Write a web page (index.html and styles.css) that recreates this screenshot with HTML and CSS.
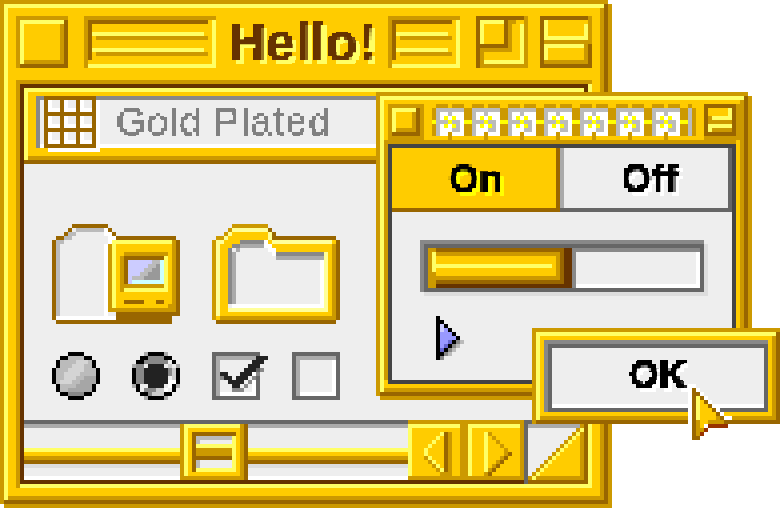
FILE: index.html
```html
<!DOCTYPE html>
<html>
<head>
  <meta charset="UTF-8" />
  <meta name="viewport" content="width=device-width, initial-scale=1.0" />
  <title>Gold Plated</title>
  <link rel="stylesheet" href="styles.css">
</head>
<body>
  <svg class="defs" width="0" height="0">
    <filter id="chunky" x="-8" y="-8" width="340" height="120" filterUnits="userSpaceOnUse" color-interpolation-filters="sRGB">
      <feFlood x="1" y="1" width="2" height="2" flood-color="#000"/>
      <feComposite width="4" height="4"/>
      <feTile result="grid"/>
      <feComposite in="SourceGraphic" in2="grid" operator="in"/>
      <feMorphology operator="dilate" radius="1"/>
      <feComponentTransfer>
        <feFuncA type="discrete" tableValues="0 1"/>
      </feComponentTransfer>
    </filter>
  </svg>

  <div class="stage">
    <!-- main window -->
    <div class="window main-window">
      <div class="titlebar">
        <div class="close-box"></div>
        <svg class="px bar-left" width="132" height="52" viewBox="0 0 33 13">
          <path stroke="#c90" d="M0 .5h33M.5 1v12M3 5.5h28M3 9.5h28"/>
          <path stroke="#960" d="M1 1.5h30M1.5 2v9"/>
          <path stroke="#ff6" d="M32.5 1v12M1 12.5h31M2 4.5h28M2 8.5h28"/>
        </svg>
        <div class="title">Hello!</div>
        <svg class="px" width="72" height="52" viewBox="0 0 18 13">
          <path stroke="#c90" d="M0 .5h18M.5 1v12M3 5.5h13M3 9.5h13"/>
          <path stroke="#960" d="M1 1.5h15M1.5 2v9"/>
          <path stroke="#ff6" d="M17.5 1v12M1 12.5h16M2 4.5h13M2 8.5h13"/>
        </svg>
        <svg class="px zoom-box" width="52" height="52" viewBox="0 0 13 13">
          <path stroke="#c90" d="M12.5 0v13M1 12.5h12M1 8.5h7M8.5 2v7M8 1.5h2M1.5 9v3"/>
          <path stroke="#960" d="M0 .5h12M.5 0v13M7.5 1v7M1 7.5h7"/>
          <path stroke="#ff6" d="M1 1.5h6M1.5 2v5M11.5 2v10M2 11.5h9"/>
        </svg>
        <svg class="px shade-box" width="52" height="52" viewBox="0 0 13 13">
          <path stroke="#c90" d="M12 .5h1M12.5 1v6M1 6.5h12M1 11.5h11M11.5 7v4"/>
          <path stroke="#960" d="M0 .5h12M.5 0v13M0 12.5h13M12.5 7v6"/>
          <path stroke="#ff6" d="M1.5 1v4M1 5.5h11M11.5 2v3M1 7.5h10M1.5 8v3"/>
        </svg>
      </div>

      <div class="well">
        <div class="header">
          <div class="field">
            <svg class="px grid-icon" width="56" height="56" viewBox="0 0 14 14">
              <path stroke="#fff" d="M13.5 1v13M1 13.5h13M1 3.5h3M5 3.5h3M9 3.5h3M1 7.5h3M5 7.5h3M9 7.5h3M1 11.5h3M5 11.5h3M9 11.5h3M1.5 1v2M5.5 1v2M9.5 1v2M1.5 5v2M5.5 5v2M9.5 5v2M1.5 9v2M5.5 9v2M9.5 9v2"/>
              <path stroke="#960" d="M0 .5h13M0 4.5h13M0 8.5h13M0 12.5h13M.5 0v13M4.5 0v13M8.5 0v13M12.5 0v13"/>
            </svg>
            <div class="field-text">Gold Plated</div>
          </div>
        </div>

        <div class="content">
          <svg class="px icon" width="128" height="100" viewBox="0 0 32 25">
            <rect x="15" y="4" width="16" height="18" fill="#fc0"/>
            <rect x="19" y="9" width="9" height="6" fill="#ccf"/>
            <path stroke="#bbb" d="M6 1.5h7M4 2.5h2M3 3.5h2M1 4.5h2M1.5 5v18"/>
            <path stroke="#fff" d="M13 1.5h1M13 2.5h2M14 3.5h2M14 4.5h1M13.5 5v18M1 23.5h15"/>
            <path stroke="#c90" d="M14.5 5v17M30.5 4v17M29 20.5h2M15 21.5h16M18 7.5h11M17.5 8v9M18 15.5h11"/>
            <path stroke="#ff6" d="M15.5 4v17M16 4.5h14M18 16.5h11M28.5 8v8"/>
            <path stroke="#cff" d="M27.5 9v6M20 14.5h8"/>
            <path stroke="#bbb" d="M25 9.5h2M24 10.5h3M23 11.5h2M22 12.5h2M20 13.5h3"/>
            <path stroke="#999" d="M26 10.5h1M25 11.5h2M24 12.5h3M23 13.5h4"/>
            <path stroke="#960" d="M5 .5h9M4 1.5h1M14 1.5h1M3 2.5h1M15 2.5h1M1 3.5h2M16 3.5h15M.5 4v20M1 24.5h29M31.5 4v19M16 22.5h15M16 23.5h14M18 8.5h10M18.5 9v6M18 19.5h5M26 19.5h2"/>
          </svg>

          <svg class="px icon" width="128" height="100" viewBox="0 0 32 25">
            <path fill="#fc0" d="M5 1h9v1h1v2h16v20H1V4h2V3h1V2h1z"/>
            <path fill="#eee" d="M4 7V6h1V5h9v1h1v1h13v14H4z"/>
            <path stroke="#888" d="M7 4.5h6M5 5.5h2M4.5 6v14M16 7.5h12"/>
            <path stroke="#aaa" d="M7 5.5h6M5.5 7v13M6 6.5h1M16 8.5h12"/>
            <path stroke="#fff" d="M13 4.5h1M13 5.5h2M14 6.5h2M15 7.5h1M27.5 9v11M5 20.5h23"/>
            <path stroke="#ff9" d="M5 1.5h9M4 2.5h1M3 3.5h1M1 4.5h2M1.5 5v18M16 4.5h14M28.5 7v14M4 21.5h25M14 2.5h1M14 3.5h1M15 4.5h1"/>
            <path stroke="#c90" d="M5 .5h9M4 1.5h1M3 2.5h1M1 3.5h2M.5 4v20M30.5 5v18M2 23.5h29"/>
            <path stroke="#960" d="M14 1.5h1M15 2.5h1M15 3.5h16M31.5 4v20M1 24.5h30"/>
          </svg>

          <svg class="px" width="48" height="48" viewBox="0 0 12 12">
            <path stroke="#bbb" d="M4 1.5h4M2 2.5h8M2 3.5h8M1 4.5h10M1 5.5h10M1 6.5h10M1 7.5h10M2 8.5h8M2 9.5h8M4 10.5h4"/>
            <path stroke="#d4d4d4" d="M6 2.5h3M5 3.5h3M4 4.5h4M3 5.5h4M3 6.5h3M2 7.5h3"/>
            <path stroke="#a6a6a6" d="M8 6.5h3M7 7.5h4M6 8.5h4M4 9.5h6"/>
            <path stroke="#888" d="M4 10.5h4"/>
            <path stroke="#000" d="M4 .5h4M2 1.5h2M8 1.5h2M1.5 2v2M10.5 2v2M.5 4v4M11.5 4v4M1.5 8v2M10.5 8v2M2 10.5h2M8 10.5h2M4 11.5h4"/>
          </svg>

          <svg class="px" width="48" height="48" viewBox="0 0 12 12">
            <path stroke="#aaa" d="M3 .5h1M8 .5h1M3 11.5h1M8 11.5h1M.5 3v1M11.5 3v1M.5 8v1M11.5 8v1"/>
            <path stroke="#888" d="M4 1.5h4M1.5 3v6M2.5 3v5M3 2.5h6M3 9.5h3M9.5 4v2M4 10.5h1"/>
            <path stroke="#ccc" d="M9 3.5h1M10 4.5h1M10 5.5h1M6 9.5h2M5 10.5h3M10 6.5h1"/>
            <path stroke="#fff" d="M9 7.5h2M9 8.5h1M8 9.5h1"/>
            <path stroke="#222" d="M4 3.5h4M3 4.5h6M3 5.5h6M3 6.5h6M3 7.5h6M4 8.5h4"/>
            <path stroke="#000" d="M4 .5h4M2 1.5h2M8 1.5h2M1 2.5h2M10 2.5h1M.5 4v4M11.5 4v4M1.5 8v2M10.5 8v2M2 10.5h2M8 10.5h2M4 11.5h4"/>
          </svg>

          <div class="check">
            <svg class="px check-mark" width="56" height="48" viewBox="0 0 14 12">
              <path stroke="#888" d="M12 4.5h1M11 5.5h1M10 6.5h1M9 7.5h1M8 8.5h1M5 9.5h3M2 6.5h1"/>
              <path stroke="#222" d="M11 1.5h3M10 2.5h3M9 3.5h3M8 4.5h3M2 5.5h2M7 5.5h3M3 6.5h2M6 6.5h3M4 7.5h4M5 8.5h2"/>
            </svg>
          </div>
          <div class="check"></div>
        </div>

        <div class="scrollbar">
          <div class="track">
            <div class="rail"></div>
            <div class="thumb">
              <div class="thumb-hole">
                <div class="thumb-rail"></div>
              </div>
            </div>
          </div>
          <div class="arrows">
            <div class="arrow-btn">
              <svg class="px" width="52" height="52" viewBox="0 0 13 13">
                <path stroke="#ff6" d="M8 2.5h1M7 3.5h1M6 4.5h1M5 5.5h1M4 6.5h1M4 7.5h1M5 8.5h1M6 9.5h1M7 10.5h1M8 11.5h1"/>
                <path stroke="#c90" d="M4 8.5h1M5 9.5h1M6 10.5h1M7 11.5h1M10.5 2v11M8 12.5h3"/>
                <path stroke="#960" d="M9.5 2v10"/>
              </svg>
            </div>
            <div class="arrow-btn">
              <svg class="px" width="52" height="52" viewBox="0 0 13 13">
                <path stroke="#ff6" d="M4.5 2v10"/>
                <path stroke="#c90" d="M5 2.5h1M6 3.5h1M7 4.5h1M8 5.5h1M9 6.5h1M9 7.5h1M8 8.5h1M7 9.5h1M6 10.5h1M5 11.5h1M4 12.5h1"/>
                <path stroke="#960" d="M10 7.5h1M9 8.5h1M8 9.5h1M7 10.5h1M6 11.5h1M5 12.5h1"/>
              </svg>
            </div>
          </div>
          <svg class="px resize-box" width="64" height="64" viewBox="0 0 16 16">
            <rect width="16" height="16" fill="#eee"/>
            <path fill="#fc0" d="M15 2v13H2z"/>
            <path stroke="#666" d="M0 .5h16M.5 0v16"/>
            <path stroke="#aaa" d="M1 1.5h13"/>
            <path stroke="#c90" d="M14 1.5h1M14.5 3v12M3 14.5h12M13 2.5h1M12 3.5h1M11 4.5h1M10 5.5h1M9 6.5h1M8 7.5h1M7 8.5h1M6 9.5h1M5 10.5h1M4 11.5h1M3 12.5h1M2 13.5h1M1 14.5h1"/>
            <path stroke="#ff6" d="M14 2.5h1M13 3.5h1M12 4.5h1M11 5.5h1M10 6.5h1M9 7.5h1M8 8.5h1M7 9.5h1M6 10.5h1M5 11.5h1M4 12.5h1M3 13.5h1M2 14.5h1"/>
            <path stroke="#960" d="M15.5 1v15M1 15.5h15"/>
          </svg>
        </div>
      </div>
    </div>

    <!-- palette window -->
    <div class="window palette">
      <div class="palette-bar">
        <div class="palette-close"></div>
        <svg class="px stripes" width="264" height="36" viewBox="0 0 66 9">
          <defs>
            <pattern id="flower" width="9" height="9" patternUnits="userSpaceOnUse">
              <path stroke="#c90" d="M1 .5h3M5 .5h3M.5 1v3M.5 5v3M8.5 1v3M8.5 5v3M4 7.5h1M4 8.5h1"/>
              <path stroke="#ff0" d="M0 4.5h1M8 4.5h1"/>
              <path stroke="#fff" d="M1 1.5h7M1 2.5h7M1 3.5h7M1 4.5h7M1 5.5h7M1 6.5h7M1 7.5h3M5 7.5h3"/>
              <path stroke="#bbb" d="M1 1.5h7M1.5 2v6M4 2.5h1M2 4.5h2M5 4.5h2M6 5.5h1M5 6.5h2"/>
              <path stroke="#ff0" d="M3 3.5h1M5 3.5h1M4 4.5h1M3 5.5h1M5 5.5h1"/>
            </pattern>
          </defs>
          <rect width="65" height="9" fill="url(#flower)"/>
          <path stroke="#c90" d="M65.5 1v7"/>
        </svg>
        <svg class="px" width="36" height="36" viewBox="0 0 9 9">
          <rect width="9" height="9" fill="#c90"/>
          <rect x="1" y="1" width="5" height="2" fill="#fc0"/>
          <path stroke="#960" d="M0 .5h8M0 7.5h8M.5 0v8M7.5 0v8"/>
          <path stroke="#ff6" d="M6.5 1v2M2 3.5h5M1 5.5h6M1 6.5h1"/>
        </svg>
      </div>

      <div class="palette-well">
        <div class="tabs">
          <div class="tab tab-on">On</div>
          <div class="tab tab-off">Off</div>
        </div>
        <div class="progress">
          <svg class="px" width="144" height="40" viewBox="0 0 36 10">
            <rect width="36" height="10" fill="#fc0"/>
            <path stroke="#c90" d="M.5 0v10M1 .5h1M2 1.5h31M32.5 2v5M2 7.5h31"/>
            <path stroke="#ff6" d="M1.5 1v5M2 4.5h29"/>
            <path stroke="#960" d="M2 .5h32M33.5 1v8M2 8.5h32"/>
            <path stroke="#630" d="M34 .5h2M34 1.5h2M34 2.5h2M34 3.5h2M34 4.5h2M34 5.5h2M34 6.5h2M34 7.5h2M34 8.5h2M2 9.5h34"/>
            <path stroke="#c90" d="M1 6.5h1M1 7.5h1M1 8.5h1M1 9.5h1"/>
          </svg>
          <div class="progress-rest"></div>
        </div>
        <svg class="px pointer" width="28" height="48" viewBox="0 0 7 12">
          <path stroke="#99f" d="M1.5 2v7M2.5 3v5M3.5 4v3M4 5.5h1"/>
          <path stroke="#66c" d="M3 6.5h1M2 7.5h1M1 8.5h1"/>
          <path stroke="#ccf" d="M1 2.5h1M1 3.5h1"/>
          <path stroke="#888" d="M5 6.5h1M4 7.5h1M3 8.5h1M2 9.5h1M1 10.5h1"/>
          <path stroke="#bbb" d="M6 6.5h1M5 7.5h1M4 8.5h1M3 9.5h1"/>
          <path stroke="#000" d="M.5 0v11M1 1.5h1M2 2.5h1M3 3.5h1M4 4.5h1M5 5.5h1M4 6.5h1M3 7.5h1M2 8.5h1M1 9.5h1"/>
        </svg>
      </div>
    </div>

    <!-- alert button -->
    <div class="window ok-window">
      <div class="ok-button">
        <div class="ok-text">OK</div>
      </div>
    </div>

    <svg class="px cursor" width="44" height="56" viewBox="0 0 11 14">
      <path stroke="#fc0" d="M3 4.5h1M3 5.5h2M3 6.5h3M3 7.5h4M3 8.5h4M3 9.5h2M3 10.5h1"/>
      <path stroke="#c90" d="M7 8.5h1M5 9.5h4M2.5 9v4M3 11.5h1"/>
      <path stroke="#ff6" d="M2.5 3v6"/>
      <path stroke="#fff" d="M.5 0v14M1 .5h1M2 1.5h1M3 2.5h1M4 3.5h1M5 4.5h1M6 5.5h1M7 6.5h1M8 7.5h1M9 8.5h2"/>
      <path stroke="#960" d="M1.5 1v13M2 2.5h1M3 3.5h1M4 4.5h1M5 5.5h1M6 6.5h1M7 7.5h1M8 8.5h1M9 9.5h1M2 13.5h1"/>
      <path stroke="#930" d="M5 10.5h5M4 11.5h1M3 12.5h1"/>
    </svg>
  </div>
</body>
</html>
```

FILE: styles.css
```css
body {
  margin: 0;
  background-color: #fff;
  font-family: "Liberation Sans", Arial, sans-serif;
}

.defs {
  position: absolute;
}

.stage {
  position: relative;
  width: 780px;
  height: 508px;
  overflow: hidden;
}

.px {
  display: block;
  flex: none;
  fill: none;
  shape-rendering: crispEdges;
}

.window {
  position: absolute;
  box-sizing: border-box;
  background-color: #fc0;
  box-shadow:
    4px 4px 0 #c90,
    inset 4px 4px 0 #c90,
    inset -4px -4px 0 #960,
    inset 8px 8px 0 #ff6,
    inset -8px -8px 0 #c90;
}

/* main window */
.main-window {
  left: 0;
  top: 0;
  width: 608px;
  height: 504px;
  padding: 16px;
}

.titlebar {
  display: flex;
  height: 52px;
  margin-bottom: 12px;
}

.close-box {
  flex: none;
  width: 52px;
  height: 52px;
  margin-right: 16px;
  box-shadow:
    inset 4px 4px 0 #c90,
    inset -4px -4px 0 #960,
    inset 8px 8px 0 #ff6,
    inset -8px -8px 0 #c90;
}

.title {
  flex: 1;
  height: 52px;
  line-height: 52px;
  text-align: center;
  font-size: 52px;
  font-weight: bold;
  letter-spacing: 0.5px;
  color: #630;
  -webkit-text-stroke: 0.5px #630;
  text-shadow: 4px 4px 0 #ff6;
  filter: url(#chunky);
}

.zoom-box {
  margin-left: 16px;
}

.shade-box {
  margin-left: 12px;
}

.well {
  display: flex;
  flex-direction: column;
  height: 408px;
  box-sizing: border-box;
  padding: 8px;
  box-shadow:
    inset 4px 4px 0 #c90,
    inset -4px -4px 0 #ff6,
    inset 8px 8px 0 #630,
    inset -8px -8px 0 #630;
}

.header {
  box-sizing: border-box;
  height: 76px;
  padding: 8px 0 0 12px;
  border-bottom: 4px solid #960;
  box-shadow: inset 4px 4px 0 #ff6, inset 0 -4px 0 #c90;
}

.field {
  display: flex;
  height: 52px;
  box-sizing: border-box;
  padding-left: 8px;
  background-color: #eee;
  box-shadow: inset 4px 4px 0 #888, inset 0 -4px 0 #fff;
}

.field-text {
  width: 260px;
  height: 48px;
  margin-left: 16px;
  line-height: 52px;
  font-size: 38px;
  letter-spacing: 1.5px;
  color: #808080;
  filter: url(#chunky);
}

.content {
  flex: 1;
  display: grid;
  grid-template-columns: repeat(4, 48px);
  grid-template-rows: 100px 48px;
  gap: 28px 32px;
  align-content: start;
  padding: 60px 0 0 28px;
  background-color: #eee;
}

.icon {
  grid-column: span 2;
}

.check {
  position: relative;
  width: 48px;
  height: 48px;
  box-sizing: border-box;
  box-shadow:
    inset 0 0 0 4px #666,
    inset 8px 8px 0 #aaa,
    inset -8px -8px 0 #fff;
}

.check-mark {
  position: absolute;
  left: 0;
  top: 0;
}

/* scroll bar */
.scrollbar {
  display: flex;
  height: 60px;
}

.track {
  position: relative;
  flex: 1;
  box-sizing: border-box;
  padding-top: 24px;
  border-top: 4px solid #666;
  background-color: #eee;
  box-shadow: inset 0 4px 0 #aaa, inset 0 -4px 0 #fff;
}

.rail {
  height: 20px;
  background: linear-gradient(#ff6 4px, #fc0 4px, #fc0 8px, #c90 8px, #c90 12px, #960 12px, #960 16px, #ddd 16px);
}

.thumb {
  position: absolute;
  left: 156px;
  top: 0;
  width: 68px;
  height: 56px;
  box-sizing: border-box;
  padding: 8px 12px 8px 12px;
  background-color: #fc0;
  box-shadow:
    inset 4px 0 0 #c90,
    inset -4px 0 0 #960,
    inset 0 -4px 0 #c90,
    inset -8px 0 0 #c90,
    inset 8px 4px 0 #ff6;
}

.thumb-hole {
  height: 40px;
  box-sizing: border-box;
  padding: 12px 4px 0 4px;
  background-color: #eee;
  box-shadow:
    inset 4px 4px 0 #960,
    inset -4px -4px 0 #ff6,
    inset 8px 8px 0 #bbb;
}

.thumb-rail {
  height: 16px;
  background: linear-gradient(#ff6 4px, #c90 4px, #c90 12px, #960 12px);
}

.arrows {
  display: flex;
  gap: 8px;
  padding: 4px 4px 4px 0;
  background-color: #c90;
}

.arrow-btn {
  background-color: #fc0;
  box-shadow: inset 4px 4px 0 #ff6;
}

.resize-box {
  margin: 0 -4px -4px 0;
  position: relative;
}

/* palette window */
.palette {
  left: 376px;
  top: 92px;
  width: 372px;
  height: 304px;
  padding: 8px;
}

.palette-bar {
  display: flex;
  gap: 8px;
  height: 40px;
  padding: 4px 0 0 4px;
  box-sizing: border-box;
}

.palette-close {
  flex: none;
  width: 36px;
  height: 36px;
  box-shadow:
    inset 0 0 0 4px #c90,
    inset -8px -8px 0 #960,
    inset 8px 8px 0 #ff6,
    inset -12px -12px 0 #c90;
}

.palette-well {
  height: 240px;
  box-sizing: border-box;
  margin: 4px;
  border: 4px solid #444;
  background-color: #eee;
  box-shadow: -4px -4px 0 #c90, 0 -4px 0 #c90;
}

.tabs {
  display: flex;
  height: 64px;
}

.tab {
  flex: none;
  box-sizing: border-box;
  height: 64px;
  line-height: 62px;
  text-align: center;
  font-size: 38px;
  font-weight: bold;
  letter-spacing: 0.5px;
  color: #000;
  -webkit-text-stroke: 1.5px #000;
  filter: url(#chunky);
}

.tab-on {
  width: 168px;
  padding-left: 4px;
  background-color: #fc0;
  border-right: 4px solid #960;
  border-bottom: 4px solid #960;
  text-shadow: 4px 4px 0 #ff0;
}

.tab-off {
  width: 172px;
  padding-left: 12px;
  border-right: 4px solid #666;
  border-bottom: 4px solid #666;
  box-shadow: inset 4px 0 0 #aaa;
  text-shadow: 4px 4px 0 #fff;
}

.progress {
  display: flex;
  width: 284px;
  height: 52px;
  box-sizing: border-box;
  margin: 28px 0 0 28px;
  padding: 8px 4px 4px 8px;
  box-shadow:
    4px 4px 0 #ddd,
    inset 4px 4px 0 #888,
    inset -4px -4px 0 #666,
    inset 8px 8px 0 #666;
}

.progress-rest {
  flex: 1;
  box-shadow:
    inset 4px 4px 0 #888,
    inset -4px -4px 0 #fff;
}

.pointer {
  margin: 24px 0 0 44px;
}

/* OK button */
.ok-window {
  left: 532px;
  top: 328px;
  width: 248px;
  height: 96px;
  padding: 12px;
  box-shadow:
    inset 4px 4px 0 #c90,
    inset -4px -4px 0 #960,
    inset 8px 8px 0 #ff6,
    inset -8px -8px 0 #c90;
}

.ok-button {
  height: 72px;
  background-color: #eee;
  box-shadow:
    inset 4px 4px 0 #888,
    inset -4px -4px 0 #666,
    inset 8px 8px 0 #666,
    inset 0 -8px 0 #fff;
}

.ok-text {
  height: 72px;
  line-height: 70px;
  padding-left: 4px;
  text-align: center;
  font-size: 38px;
  font-weight: bold;
  color: #000;
  -webkit-text-stroke: 1.5px #000;
  text-shadow: 4px 4px 0 #fff;
  filter: url(#chunky);
}

.cursor {
  position: absolute;
  left: 688px;
  top: 384px;
}
```
